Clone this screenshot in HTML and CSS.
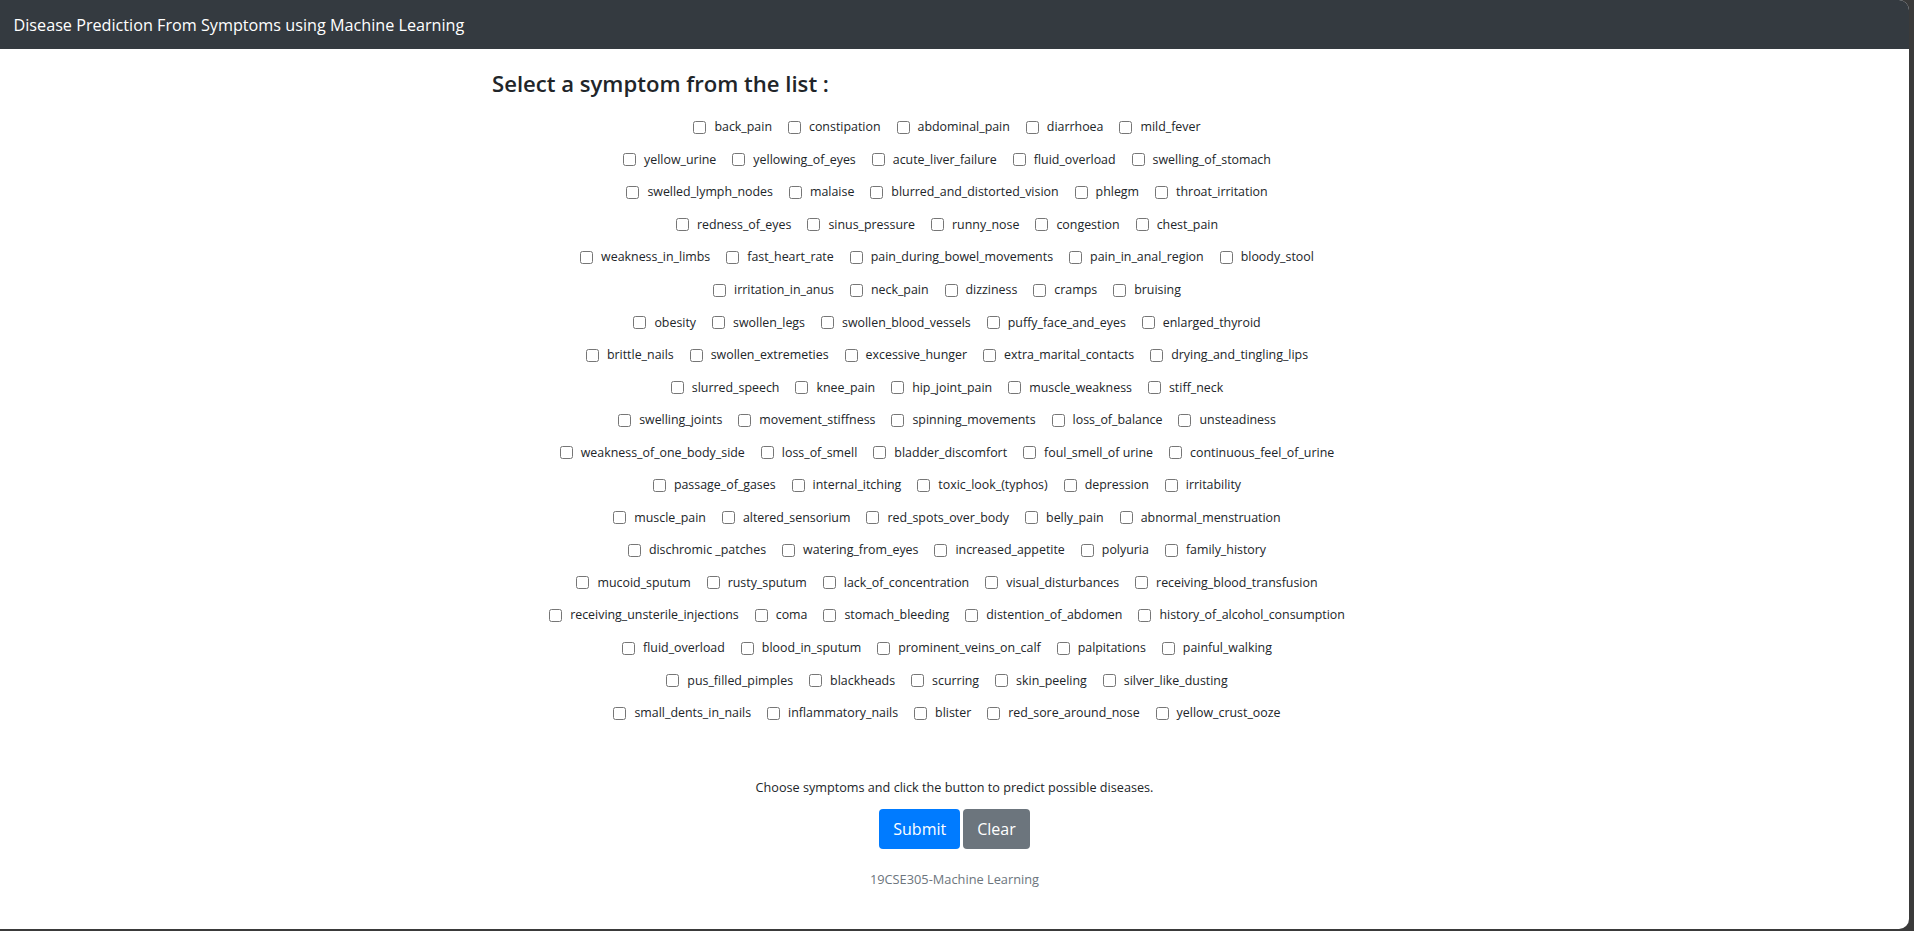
FILE: index.html
```html
<!DOCTYPE html>
<html lang="en">
<head>
<meta charset="utf-8">
<title>Disease Prediction From Symptoms using Machine Learning</title>
<link rel="stylesheet" href="styles.css">
</head>
<body>
<div class="window">
  <header class="navbar">
    <span class="brand">Disease Prediction From Symptoms using Machine Learning</span>
  </header>
  <main class="container">
    <h4 class="heading">Select a symptom from the list :</h4>
    <form class="symptoms">
      <div class="row"><label class="item"><input type="checkbox"><span>back_pain</span></label><label class="item"><input type="checkbox"><span>constipation</span></label><label class="item"><input type="checkbox"><span>abdominal_pain</span></label><label class="item"><input type="checkbox"><span>diarrhoea</span></label><label class="item"><input type="checkbox"><span>mild_fever</span></label></div>
      <div class="row"><label class="item"><input type="checkbox"><span>yellow_urine</span></label><label class="item"><input type="checkbox"><span>yellowing_of_eyes</span></label><label class="item"><input type="checkbox"><span>acute_liver_failure</span></label><label class="item"><input type="checkbox"><span>fluid_overload</span></label><label class="item"><input type="checkbox"><span>swelling_of_stomach</span></label></div>
      <div class="row"><label class="item"><input type="checkbox"><span>swelled_lymph_nodes</span></label><label class="item"><input type="checkbox"><span>malaise</span></label><label class="item"><input type="checkbox"><span>blurred_and_distorted_vision</span></label><label class="item"><input type="checkbox"><span>phlegm</span></label><label class="item"><input type="checkbox"><span>throat_irritation</span></label></div>
      <div class="row"><label class="item"><input type="checkbox"><span>redness_of_eyes</span></label><label class="item"><input type="checkbox"><span>sinus_pressure</span></label><label class="item"><input type="checkbox"><span>runny_nose</span></label><label class="item"><input type="checkbox"><span>congestion</span></label><label class="item"><input type="checkbox"><span>chest_pain</span></label></div>
      <div class="row"><label class="item"><input type="checkbox"><span>weakness_in_limbs</span></label><label class="item"><input type="checkbox"><span>fast_heart_rate</span></label><label class="item"><input type="checkbox"><span>pain_during_bowel_movements</span></label><label class="item"><input type="checkbox"><span>pain_in_anal_region</span></label><label class="item"><input type="checkbox"><span>bloody_stool</span></label></div>
      <div class="row"><label class="item"><input type="checkbox"><span>irritation_in_anus</span></label><label class="item"><input type="checkbox"><span>neck_pain</span></label><label class="item"><input type="checkbox"><span>dizziness</span></label><label class="item"><input type="checkbox"><span>cramps</span></label><label class="item"><input type="checkbox"><span>bruising</span></label></div>
      <div class="row"><label class="item"><input type="checkbox"><span>obesity</span></label><label class="item"><input type="checkbox"><span>swollen_legs</span></label><label class="item"><input type="checkbox"><span>swollen_blood_vessels</span></label><label class="item"><input type="checkbox"><span>puffy_face_and_eyes</span></label><label class="item"><input type="checkbox"><span>enlarged_thyroid</span></label></div>
      <div class="row"><label class="item"><input type="checkbox"><span>brittle_nails</span></label><label class="item"><input type="checkbox"><span>swollen_extremeties</span></label><label class="item"><input type="checkbox"><span>excessive_hunger</span></label><label class="item"><input type="checkbox"><span>extra_marital_contacts</span></label><label class="item"><input type="checkbox"><span>drying_and_tingling_lips</span></label></div>
      <div class="row"><label class="item"><input type="checkbox"><span>slurred_speech</span></label><label class="item"><input type="checkbox"><span>knee_pain</span></label><label class="item"><input type="checkbox"><span>hip_joint_pain</span></label><label class="item"><input type="checkbox"><span>muscle_weakness</span></label><label class="item"><input type="checkbox"><span>stiff_neck</span></label></div>
      <div class="row"><label class="item"><input type="checkbox"><span>swelling_joints</span></label><label class="item"><input type="checkbox"><span>movement_stiffness</span></label><label class="item"><input type="checkbox"><span>spinning_movements</span></label><label class="item"><input type="checkbox"><span>loss_of_balance</span></label><label class="item"><input type="checkbox"><span>unsteadiness</span></label></div>
      <div class="row"><label class="item"><input type="checkbox"><span>weakness_of_one_body_side</span></label><label class="item"><input type="checkbox"><span>loss_of_smell</span></label><label class="item"><input type="checkbox"><span>bladder_discomfort</span></label><label class="item"><input type="checkbox"><span>foul_smell_of urine</span></label><label class="item"><input type="checkbox"><span>continuous_feel_of_urine</span></label></div>
      <div class="row"><label class="item"><input type="checkbox"><span>passage_of_gases</span></label><label class="item"><input type="checkbox"><span>internal_itching</span></label><label class="item"><input type="checkbox"><span>toxic_look_(typhos)</span></label><label class="item"><input type="checkbox"><span>depression</span></label><label class="item"><input type="checkbox"><span>irritability</span></label></div>
      <div class="row"><label class="item"><input type="checkbox"><span>muscle_pain</span></label><label class="item"><input type="checkbox"><span>altered_sensorium</span></label><label class="item"><input type="checkbox"><span>red_spots_over_body</span></label><label class="item"><input type="checkbox"><span>belly_pain</span></label><label class="item"><input type="checkbox"><span>abnormal_menstruation</span></label></div>
      <div class="row"><label class="item"><input type="checkbox"><span>dischromic _patches</span></label><label class="item"><input type="checkbox"><span>watering_from_eyes</span></label><label class="item"><input type="checkbox"><span>increased_appetite</span></label><label class="item"><input type="checkbox"><span>polyuria</span></label><label class="item"><input type="checkbox"><span>family_history</span></label></div>
      <div class="row"><label class="item"><input type="checkbox"><span>mucoid_sputum</span></label><label class="item"><input type="checkbox"><span>rusty_sputum</span></label><label class="item"><input type="checkbox"><span>lack_of_concentration</span></label><label class="item"><input type="checkbox"><span>visual_disturbances</span></label><label class="item"><input type="checkbox"><span>receiving_blood_transfusion</span></label></div>
      <div class="row"><label class="item"><input type="checkbox"><span>receiving_unsterile_injections</span></label><label class="item"><input type="checkbox"><span>coma</span></label><label class="item"><input type="checkbox"><span>stomach_bleeding</span></label><label class="item"><input type="checkbox"><span>distention_of_abdomen</span></label><label class="item"><input type="checkbox"><span>history_of_alcohol_consumption</span></label></div>
      <div class="row"><label class="item"><input type="checkbox"><span>fluid_overload</span></label><label class="item"><input type="checkbox"><span>blood_in_sputum</span></label><label class="item"><input type="checkbox"><span>prominent_veins_on_calf</span></label><label class="item"><input type="checkbox"><span>palpitations</span></label><label class="item"><input type="checkbox"><span>painful_walking</span></label></div>
      <div class="row"><label class="item"><input type="checkbox"><span>pus_filled_pimples</span></label><label class="item"><input type="checkbox"><span>blackheads</span></label><label class="item"><input type="checkbox"><span>scurring</span></label><label class="item"><input type="checkbox"><span>skin_peeling</span></label><label class="item"><input type="checkbox"><span>silver_like_dusting</span></label></div>
      <div class="row"><label class="item"><input type="checkbox"><span>small_dents_in_nails</span></label><label class="item"><input type="checkbox"><span>inflammatory_nails</span></label><label class="item"><input type="checkbox"><span>blister</span></label><label class="item"><input type="checkbox"><span>red_sore_around_nose</span></label><label class="item"><input type="checkbox"><span>yellow_crust_ooze</span></label></div>
    </form>
    <p class="hint">Choose symptoms and click the button to predict possible diseases.</p>
    <div class="actions">
      <button type="button" class="btn btn-primary">Submit</button>
      <button type="button" class="btn btn-secondary">Clear</button>
    </div>
    <p class="footer">19CSE305-Machine Learning</p>
  </main>
</div>
</body>
</html>
```

FILE: styles.css
```css
html, body {
  margin: 0;
  padding: 0;
  height: 100%;
}
body {
  background: #3a3a3a;
  font-family: "Open Sans", "Noto Sans", sans-serif;
  color: #212529;
  overflow: hidden;
}
.window {
  width: 1909px;
  height: 929px;
  background: #ffffff;
  border-radius: 0 10px 10px 0;
  overflow: hidden;
  display: flex;
  flex-direction: column;
}
.navbar {
  height: 49px;
  flex: 0 0 49px;
  background: #343a40;
  display: flex;
  align-items: center;
  padding-left: 13.5px;
}
.brand {
  color: #ffffff;
  font-size: 16.2px;
  line-height: 20px;
  white-space: nowrap;
}
.container {
  width: 925px;
  margin: 0 auto;
  display: flex;
  flex-direction: column;
}
.heading {
  margin: 20px 0 0 0;
  font-size: 22.1px;
  font-weight: 600;
  line-height: 29px;
  color: #212529;
}
.symptoms {
  margin: 13px 0 0 0;
  display: flex;
  flex-direction: column;
}
.row {
  height: 32.55px;
  display: flex;
  justify-content: center;
  align-items: center;
  padding-left: 1px;
}
.item {
  display: flex;
  align-items: center;
  margin-right: 16px;
  font-size: 12.4px;
  line-height: 16px;
  white-space: nowrap;
}
.item input {
  margin: 0 8px 0 0;
  width: 13px;
  height: 13px;
}
.hint {
  margin: 47.5px 0 0 0;
  text-align: center;
  font-size: 12.65px;
  line-height: 20px;
}
.actions {
  margin-top: 12px;
  display: flex;
  justify-content: center;
  gap: 3px;
}
.btn {
  height: 40px;
  border: none;
  border-radius: 4px;
  color: #ffffff;
  font-family: "Open Sans", "Noto Sans", sans-serif;
  font-size: 16px;
  line-height: 24px;
  padding: 0 14px;
}
.btn-primary {
  background: #007bff;
}
.btn-secondary {
  background: #6c757d;
}
.footer {
  margin: 20px 0 0 0;
  text-align: center;
  font-size: 12.8px;
  line-height: 20px;
  color: #6c757d;
}
```
